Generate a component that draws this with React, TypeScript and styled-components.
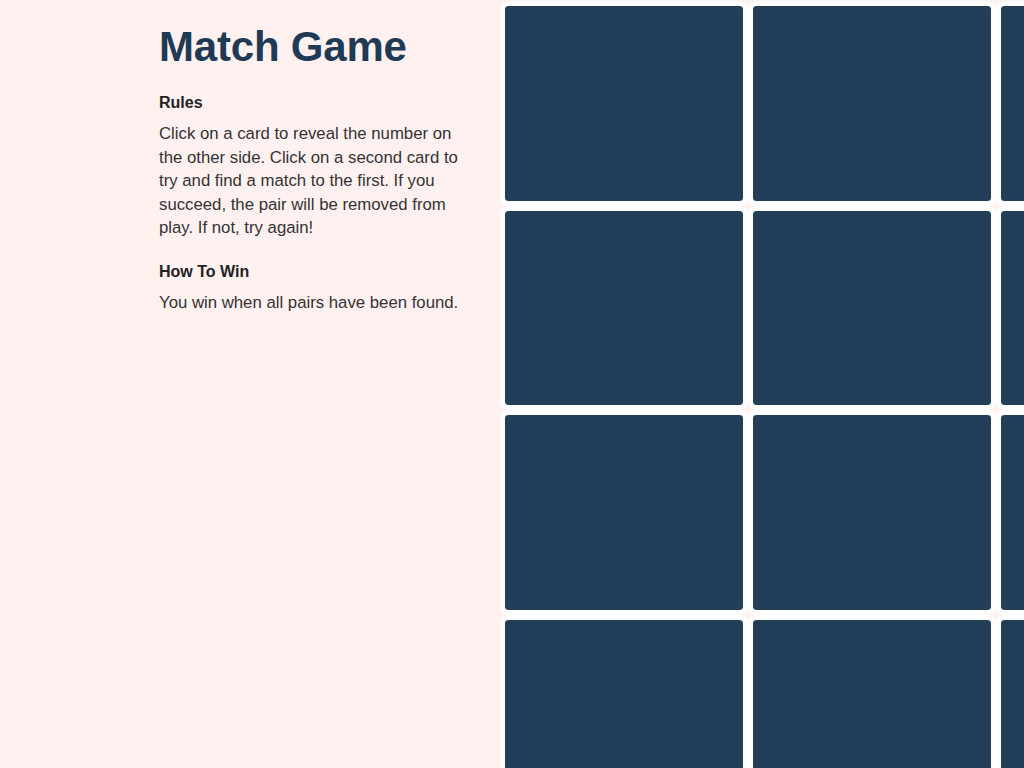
import React from "react";
import styled, { createGlobalStyle } from "styled-components";

const Global = createGlobalStyle`
  html, body {
    margin: 0;
    padding: 0;
    height: 768px;
    overflow: hidden;
    background: #fff1f0;
  }
  body {
    font-family: "Liberation Sans", Arial, Helvetica, sans-serif;
  }
`;

const Page = styled.div`
  display: flex;
  width: 1024px;
  height: 768px;
  overflow: hidden;
  background: #fff1f0;
`;

const Sidebar = styled.aside`
  flex: 0 0 500px;
  box-sizing: border-box;
  padding: 22px 0 0 159px;
`;

const Info = styled.div`
  width: 305px;
`;

const Title = styled.h1`
  margin: 0 0 21px;
  font-size: 42px;
  line-height: 50px;
  font-weight: 700;
  color: #1f3a55;
  letter-spacing: -0.2px;
`;

const Heading = styled.h2`
  margin: 0 0 9px;
  font-size: 16px;
  line-height: 20px;
  font-weight: 700;
  color: #222;
`;

const Text = styled.p<{ $gap?: number }>`
  margin: 0 0 ${(p) => p.$gap ?? 0}px;
  font-size: 16.75px;
  line-height: 23.5px;
  color: #333;
`;

const Board = styled.div`
  flex: 0 0 auto;
  display: grid;
  grid-template-columns: repeat(4, 248px);
  grid-auto-rows: 204.5px;
  padding-top: 1px;
`;

const Card = styled.div`
  box-sizing: border-box;
  border: 5px solid #ffffff;
  border-radius: 8px;
  background: #223e58;
  background-clip: padding-box;
`;

export default function App() {
  const cards = Array.from({ length: 16 }, (_, i) => i);
  return (
    <>
      <Global />
      <Page>
        <Sidebar>
          <Info>
            <Title>Match Game</Title>
            <Heading>Rules</Heading>
            <Text $gap={22}>
              Click on a card to reveal the number on the other side. Click on a
              second card to try and find a match to the first. If you succeed,
              the pair will be removed from play. If not, try again!
            </Text>
            <Heading>How To Win</Heading>
            <Text>You win when all pairs have been found.</Text>
          </Info>
        </Sidebar>
        <Board>
          {cards.map((i) => (
            <Card key={i} />
          ))}
        </Board>
      </Page>
    </>
  );
}
